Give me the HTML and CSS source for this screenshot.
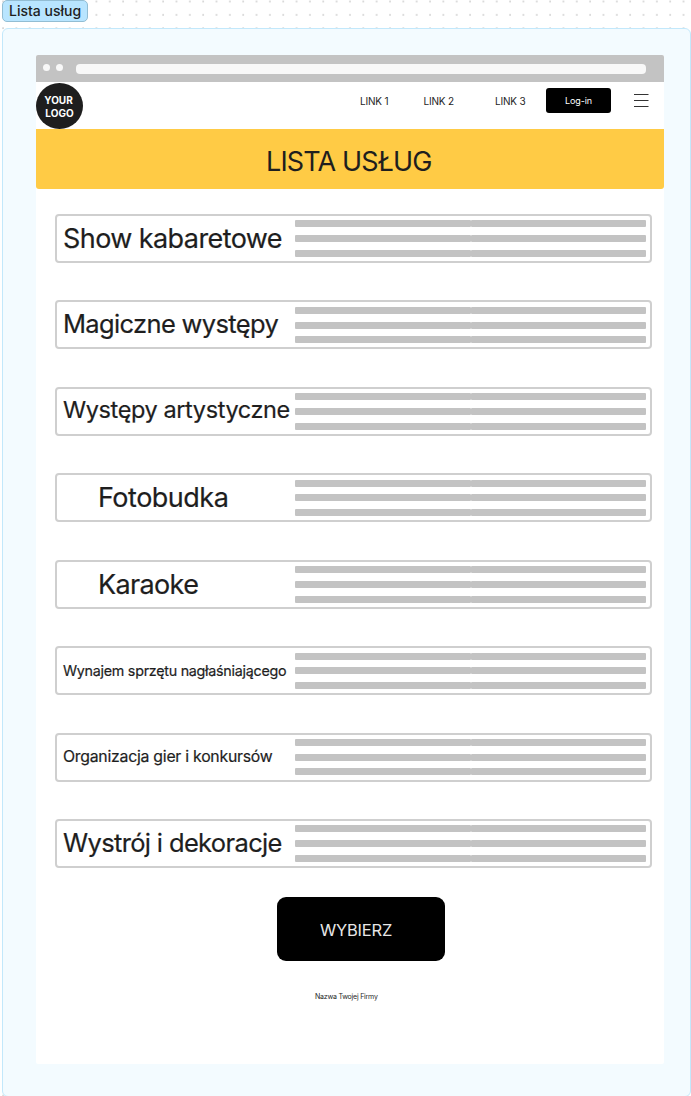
FILE: index.html
```html
<!DOCTYPE html>
<html lang="pl">
<head>
<meta charset="utf-8">
<title>Lista usług</title>
<link rel="stylesheet" href="styles.css">
</head>
<body>
<div class="tag"><span>Lista usług</span></div>
<main class="board">
  <div class="window">
    <div class="browser-bar"><i class="dot"></i><i class="dot"></i><div class="address"></div></div>
    <header class="header">
      <div class="logo"><span class="logo-top">YOUR</span><span>LOGO</span></div>
      <nav class="nav"><a>LINK 1</a><a>LINK 2</a><a>LINK 3</a></nav>
      <button class="login">Log-in</button>
      <svg class="menu" viewBox="0 0 16 16" width="16" height="16"><path d="M1 2.5h14.5M1 8.5h14.5M1 14.5h14.5" stroke="#333" stroke-width="1" fill="none"/></svg>
    </header>
    <h1 class="banner"><span>LISTA USŁUG</span></h1>
    <section class="services">
      <article class="service"><h2 class="name show">Show kabaretowe</h2><div class="lines"><i></i><i></i><i></i><i></i><i></i><i></i></div></article>
      <article class="service"><h2 class="name magic">Magiczne występy</h2><div class="lines"><i></i><i></i><i></i><i></i><i></i><i></i></div></article>
      <article class="service"><h2 class="name art">Występy artystyczne</h2><div class="lines"><i></i><i></i><i></i><i></i><i></i><i></i></div></article>
      <article class="service"><h2 class="name photo">Fotobudka</h2><div class="lines"><i></i><i></i><i></i><i></i><i></i><i></i></div></article>
      <article class="service"><h2 class="name karaoke">Karaoke</h2><div class="lines"><i></i><i></i><i></i><i></i><i></i><i></i></div></article>
      <article class="service"><h2 class="name sound">Wynajem sprzętu nagłaśniającego</h2><div class="lines"><i></i><i></i><i></i><i></i><i></i><i></i></div></article>
      <article class="service"><h2 class="name games">Organizacja gier i konkursów</h2><div class="lines"><i></i><i></i><i></i><i></i><i></i><i></i></div></article>
      <article class="service"><h2 class="name decor">Wystrój i dekoracje</h2><div class="lines"><i></i><i></i><i></i><i></i><i></i><i></i></div></article>
    </section>
    <button class="choose">WYBIERZ</button>
    <footer class="footer">Nazwa Twojej Firmy</footer>
  </div>
</main>
</body>
</html>
```
FILE: styles.css
```css
* { box-sizing: border-box; }
html { overflow: hidden; }
body {
  margin: 0;
  width: 691px;
  height: 1096px;
  overflow: hidden;
  font-family: Inter, "Liberation Sans", sans-serif;
  color: #1e1e1e;
  background: #fff radial-gradient(circle at 1px 1px, #c9c9c9 0.5px, transparent 1px) 2px 0.5px / 13.35px 13.35px;
}
.tag {
  width: 86px;
  height: 22px;
  margin-left: 2px;
  border: 1px solid #92bdd3;
  border-radius: 5px;
  background: #b8e5ff;
  font-size: 14px;
  font-weight: 500;
  line-height: 20px;
  padding-left: 6px;
  white-space: nowrap;
}
.board {
  width: 689px;
  height: 1069px;
  margin: 6px 0 0 2px;
  padding: 26px 0 0 33px;
  border: 1px solid #c2e8fb;
  border-radius: 6px;
  background: #f3fbff;
}
.window {
  width: 628px;
  height: 1009px;
  background: #fff;
  border-radius: 2px;
}
.browser-bar {
  display: flex;
  align-items: center;
  height: 27px;
  padding: 0 18px 0 6.5px;
  background: #c3c3c3;
  border-radius: 2px 2px 0 0;
}
.dot { width: 7px; height: 7px; margin: 0 6.3px 3px 0; border-radius: 50%; background: #f8f8f8; }
.address { flex: 1; height: 10px; margin-left: 7px; border-radius: 4px; background: #f8f8f8; }
.header { display: flex; height: 47px; }
.logo {
  display: flex;
  flex-direction: column;
  align-items: center;
  width: 47px;
  height: 46px;
  margin-top: 1px;
  padding-top: 11px;
  border-radius: 50%;
  background: #1e1e1e;
  color: #fff;
  font-size: 10px;
  font-weight: 700;
  line-height: 13px;
}
.logo-top { padding-right: 2px; }
.nav { display: flex; width: 463px; padding: 13px 0 0 277px; font-size: 10px; line-height: 12px; letter-spacing: -0.2px; white-space: nowrap; }
.nav a { width: 63.5px; flex: none; }
.nav a:nth-child(2) { width: 71.5px; }
.login {
  width: 65px;
  height: 25px;
  margin: 6px 23px 0 0;
  padding: 0;
  border: 0;
  border-radius: 3px;
  background: #000;
  color: #fff;
  font: 9px/25px Inter, sans-serif;
  letter-spacing: -0.1px;
}
.menu { margin: 10px 0 0 -1px; }
.banner {
  height: 60px;
  margin: 0;
  padding-left: 230px;
  border-radius: 0 0 3px 3px;
  background: #ffcb45;
  font-size: 27px;
  font-weight: 400;
  line-height: 65px;
  letter-spacing: -0.85px;
  white-space: nowrap;
}
.services { display: grid; row-gap: 37.45px; padding: 25px 12px 0 19px; }
.service {
  display: flex;
  height: 49px;
  border: 2px solid #cfcfcf;
  border-radius: 4px;
}
.name { flex: none; width: 238px; margin: 0; padding-left: 6px; font-weight: 400; line-height: 45px; white-space: nowrap; -webkit-text-stroke: 0.2px #1e1e1e; }
.show { font-size: 27px; letter-spacing: -0.58px; }
.magic { font-size: 25.5px; letter-spacing: -0.66px; line-height: 43px; }
.art { font-size: 23.5px; letter-spacing: -0.4px; line-height: 41px; }
.photo, .karaoke { font-size: 27px; padding-left: 41px; letter-spacing: -0.5px; }
.karaoke { letter-spacing: -0.65px; }
.sound { font-size: 14.3px; letter-spacing: -0.26px; }
.games { font-size: 15.8px; letter-spacing: -0.24px; line-height: 44px; }
.decor { font-size: 25.5px; letter-spacing: -0.65px; line-height: 43px; }
.lines {
  display: grid;
  grid-template-columns: 175.5px 175.5px;
  grid-auto-rows: 7px;
  row-gap: 7.7px;
  padding-top: 4.4px;
}
.lines i { border-radius: 1px; background: #c3c3c3; }
.choose {
  display: block;
  width: 168px;
  height: 64px;
  margin: 29px 0 0 241px;
  padding: 2px 10px 0 0;
  border: 0;
  border-radius: 9px;
  background: #000;
  color: #e6e6e6;
  font: 16.5px Inter, sans-serif;
  letter-spacing: -0.2px;
}
.footer { margin: 31px 0 0 279px; font-size: 7px; line-height: 9px; letter-spacing: -0.22px; }
```
